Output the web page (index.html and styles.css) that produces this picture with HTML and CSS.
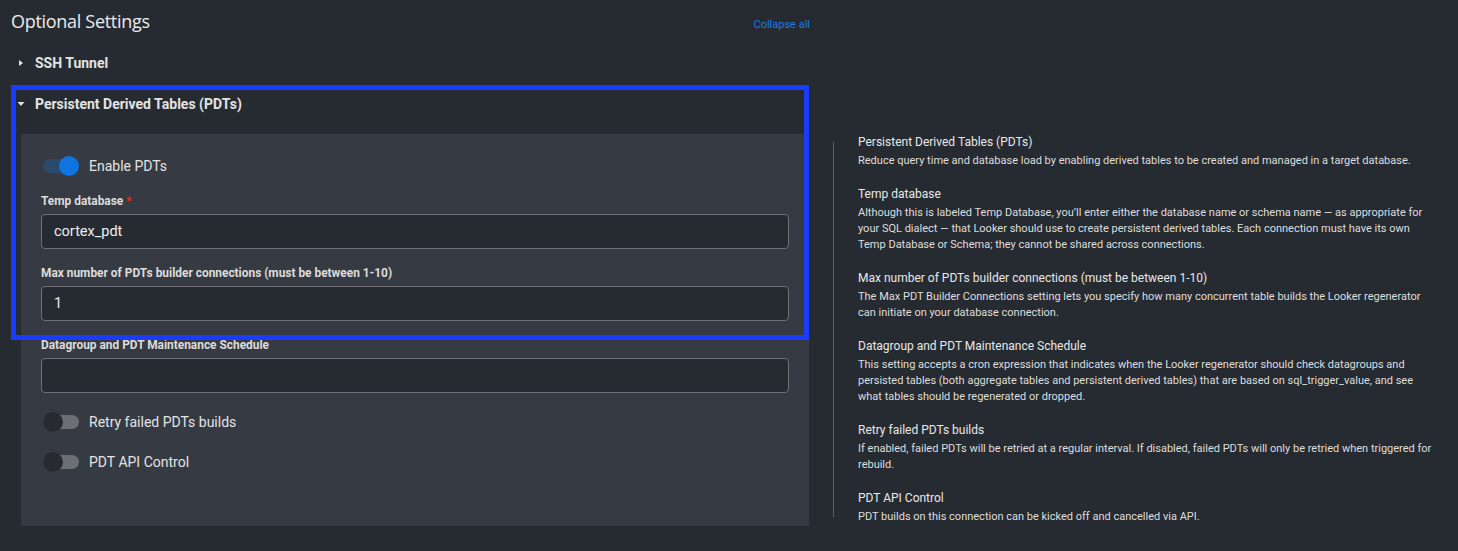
FILE: index.html
```html
<!DOCTYPE html>
<html lang="en">
<head>
<meta charset="utf-8">
<title>Optional Settings</title>
<link rel="stylesheet" href="styles.css">
</head>
<body>
<div class="page">
  <div class="left">
    <div class="title-row">
      <h1 class="title">Optional Settings</h1>
      <a class="collapse" href="#">Collapse all</a>
    </div>
    <div class="acc-head ssh">
      <svg class="caret" width="10" height="10" viewBox="0 0 10 10"><path d="M3 2 L7 5 L3 8 Z" fill="#e3e3e3"/></svg>
      <span>SSH Tunnel</span>
    </div>
    <div class="pdt-section">
      <div class="acc-head pdt">
        <svg class="caret" width="10" height="10" viewBox="0 0 10 10"><path d="M1.5 3 L8.5 3 L5 7 Z" fill="#e3e3e3"/></svg>
        <span>Persistent Derived Tables (PDTs)</span>
      </div>
      <div class="panel">
        <div class="toggle-row">
          <span class="toggle on"><span class="knob"></span></span>
          <span class="toggle-label">Enable PDTs</span>
        </div>
        <div class="field first">
          <label class="field-label">Temp database <span class="req">*</span></label>
          <div class="input">cortex_pdt</div>
        </div>
        <div class="field">
          <label class="field-label">Max number of PDTs builder connections (must be between 1-10)</label>
          <div class="input">1</div>
        </div>
        <div class="field">
          <label class="field-label">Datagroup and PDT Maintenance Schedule</label>
          <div class="input"></div>
        </div>
        <div class="toggle-row off-row">
          <span class="toggle off"><span class="knob"></span></span>
          <span class="toggle-label">Retry failed PDTs builds</span>
        </div>
        <div class="toggle-row off-row">
          <span class="toggle off"><span class="knob"></span></span>
          <span class="toggle-label">PDT API Control</span>
        </div>
      </div>
      <div class="highlight"></div>
    </div>
  </div>
  <div class="help">
    <div class="sep"></div>
    <div class="help-content">
      <div class="help-item">
        <div class="help-title">Persistent Derived Tables (PDTs)</div>
        <p class="help-text">Reduce query time and database load by enabling derived tables to be created and managed in a target database.</p>
      </div>
      <div class="help-item">
        <div class="help-title">Temp database</div>
        <p class="help-text">Although this is labeled Temp Database, you’ll enter either the database name or schema name — as appropriate for your SQL dialect — that Looker should use to create persistent derived tables. Each connection must have its own Temp Database or Schema; they cannot be shared across connections.</p>
      </div>
      <div class="help-item">
        <div class="help-title">Max number of PDTs builder connections (must be between 1-10)</div>
        <p class="help-text">The Max PDT Builder Connections setting lets you specify how many concurrent table builds the Looker regenerator can initiate on your database connection.</p>
      </div>
      <div class="help-item">
        <div class="help-title">Datagroup and PDT Maintenance Schedule</div>
        <p class="help-text">This setting accepts a cron expression that indicates when the Looker regenerator should check datagroups and persisted tables (both aggregate tables and persistent derived tables) that are based on sql_trigger_value, and see what tables should be regenerated or dropped.</p>
      </div>
      <div class="help-item">
        <div class="help-title">Retry failed PDTs builds</div>
        <p class="help-text">If enabled, failed PDTs will be retried at a regular interval. If disabled, failed PDTs will only be retried when triggered for rebuild.</p>
      </div>
      <div class="help-item">
        <div class="help-title">PDT API Control</div>
        <p class="help-text">PDT builds on this connection can be kicked off and cancelled via API.</p>
      </div>
    </div>
  </div>
</div>
</body>
</html>
```
FILE: styles.css
```css
* { box-sizing: border-box; }
html, body {
  margin: 0;
  padding: 0;
  background: #262b31;
  height: 100%;
}
body {
  font-family: Roboto, "Liberation Sans", sans-serif;
  color: #e3e3e3;
  overflow: hidden;
}
.page {
  display: flex;
  align-items: flex-start;
  padding-left: 11px;
}
.left {
  width: 799px;
  flex: none;
}
.title-row {
  height: 42px;
  display: flex;
  align-items: center;
  justify-content: space-between;
}
.title {
  margin: 0;
  font-family: "Open Sans", Roboto, sans-serif;
  font-weight: 400;
  font-size: 18px;
  letter-spacing: -0.3px;
  color: #ececec;
}
.collapse {
  font-size: 11px;
  color: #1b7ae6;
  text-decoration: none;
  padding-top: 6px;
}
.acc-head {
  display: flex;
  align-items: center;
  height: 42px;
  padding-left: 4px;
  font-size: 14px;
  font-weight: 700;
  color: #e3e3e3;
}
.acc-head.pdt { height: 40px; }
.caret {
  margin-right: 9px;
  margin-left: 1px;
}
.pdt-section {
  position: relative;
}
.panel {
  margin-top: 10px;
  margin-left: 10px;
  width: 788px;
  background: #363a42;
  padding: 20px 20px 52px 20px;
}
.toggle-row {
  display: flex;
  align-items: center;
  height: 24px;
  padding-left: 2px;
}
.off-row { margin-top: 16px; }
.field + .off-row { margin-top: 17px; }
.toggle {
  position: relative;
  width: 36px;
  height: 14px;
  border-radius: 7px;
  margin-right: 10px;
  flex: none;
}
.toggle.on { background: #2a4a6c; }
.toggle.off { background: #6b6e72; }
.knob {
  position: absolute;
  top: -3px;
  width: 20px;
  height: 20px;
  border-radius: 50%;
}
.toggle.on .knob { right: 0; background: #0f74e2; }
.toggle.off .knob { left: 0; background: #272b31; }
.toggle-label {
  font-size: 14px;
  color: #e3e3e3;
}
.field { margin-top: 16px; }
.field.first { margin-top: 15px; }
.field-label {
  display: block;
  font-size: 11.9px;
  font-weight: 700;
  line-height: 16px;
  color: #dcdcdc;
  margin-bottom: 5px;
}
.req { color: #d93025; }
.input {
  height: 35px;
  background: #262b31;
  border: 1px solid #6e7075;
  border-radius: 4px;
  padding: 0 12px;
  display: flex;
  align-items: center;
  font-size: 14.5px;
  color: #eeeeee;
}
.highlight {
  position: absolute;
  left: 0;
  top: 1px;
  width: 798px;
  height: 255px;
  border: 5px solid #1a3cff;
  pointer-events: none;
}
.help {
  display: flex;
  margin-left: 23px;
  margin-top: 132px;
}
.sep {
  width: 1px;
  background: #5f6165;
  margin-top: 10px;
  margin-bottom: 8px;
  flex: none;
}
.help-content {
  padding-left: 24px;
  width: 604px;
}
.help-item { margin-bottom: 15px; }
.help-item:last-child { margin-bottom: 0; }
.help-title {
  font-family: Roboto, sans-serif;
  font-size: 12px;
  line-height: 20px;
  margin-bottom: 1px;
  color: #e8e8e8;
}
.help-text {
  margin: 0;
  font-size: 11px;
  line-height: 16px;
  color: #dedede;
}
```
